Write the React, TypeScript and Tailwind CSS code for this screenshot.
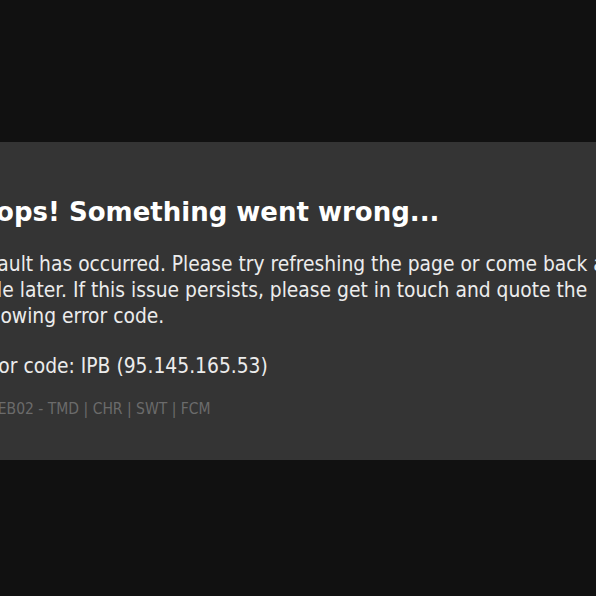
export default function App() {
  return (
    <div className="w-[596px] h-[596px] overflow-hidden bg-[#111111] flex flex-col">
      <div className="mt-[142px] h-[318px] bg-[#343434] flex flex-col -ml-[26px] w-[720px]">
        <h1 className="mt-[53px] text-[26px] leading-[34px] font-bold text-white" style={{ fontFamily: '"DejaVu Sans", Verdana, sans-serif' }}>
          Oops! Something went wrong...
        </h1>
        <div className="mt-[22px] -ml-[2px] text-[20.8px] leading-[26px] text-[#ececec] w-[700px]" style={{ fontFamily: '"DejaVu Sans Condensed", "DejaVu Sans", sans-serif' }}>
          <p>A fault has occurred. Please try refreshing the page or come back a<br />little later. If this issue persists, please get in touch and quote the<br />following error code.</p>
          <p className="mt-[24px]">Error code: IPB (95.145.165.53)</p>
          <p className="mt-[20px] ml-[12px] text-[15.5px] leading-[20px] text-[#6b6b6b]">WEB02 - TMD | CHR | SWT | FCM</p>
        </div>
      </div>
    </div>
  );
}
